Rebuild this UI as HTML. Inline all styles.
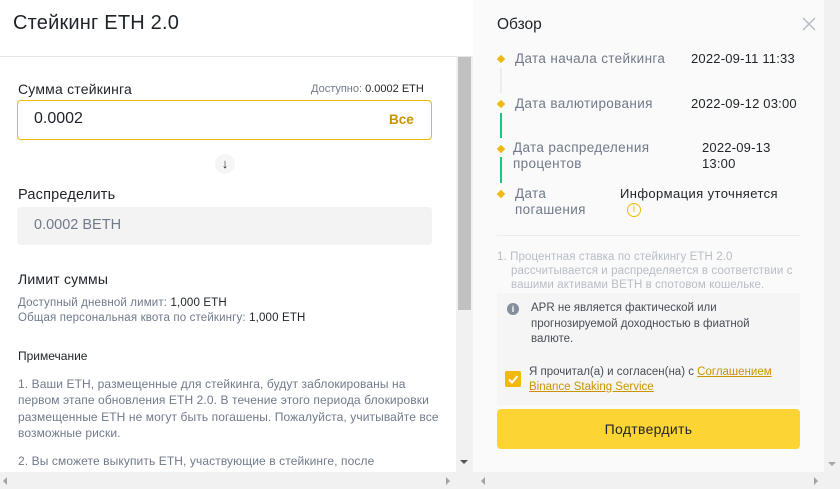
<!DOCTYPE html>
<html><head><meta charset="utf-8"><style>
*{box-sizing:border-box;margin:0;padding:0}
body{width:840px;height:489px;overflow:hidden;background:#fff;font-family:"Liberation Sans","DejaVu Sans",sans-serif;position:relative;color:#1e2329}
.abs{position:absolute}
</style></head><body>
<div class="abs" style="left:0;top:0;width:473px;height:489px;background:#fff"></div>
<div class="abs" style="left:13px;top:12px;font-size:20px;color:#1e2329;letter-spacing:0.2px">Стейкинг ETH 2.0</div>
<div class="abs" style="left:0;top:56px;width:473px;height:1px;background:#e6e6e6"></div>
<div class="abs" style="left:18px;top:81px;font-size:14px;color:#1e2329;letter-spacing:0.2px">Сумма стейкинга</div>
<div class="abs" style="left:311px;top:83px;font-size:11px;color:#707a8a">Доступно: <span style="color:#1e2329">0.0002 ETH</span></div>
<div class="abs" style="left:17px;top:100px;width:415px;height:40px;border:1px solid #f0b90b;border-radius:4px"></div>
<div class="abs" style="left:34px;top:110px;font-size:16px;color:#1e2329">0.0002</div>
<div class="abs" style="left:389px;top:112px;font-size:13.5px;color:#c99400;font-weight:bold">Все</div>
<div class="abs" style="left:215px;top:154px;width:20px;height:20px;border-radius:50%;background:#f5f5f5;text-align:center;font-size:13px;line-height:20px">↓</div>
<div class="abs" style="left:18px;top:187px;font-size:14.5px;color:#1e2329;letter-spacing:0.2px">Распределить</div>
<div class="abs" style="left:17px;top:207px;width:415px;height:38px;background:#f3f3f3;border-radius:4px"></div>
<div class="abs" style="left:34px;top:217px;font-size:14.5px;color:#707a8a">0.0002 BETH</div>
<div class="abs" style="left:18px;top:271px;font-size:14px;color:#1e2329;letter-spacing:0.2px">Лимит суммы</div>
<div class="abs" style="left:18px;top:296px;font-size:11.5px;line-height:14.5px;color:#707a8a;letter-spacing:0.15px">Доступный дневной лимит: <span style="color:#1e2329">1,000 ETH</span><br>Общая персональная квота по стейкингу: <span style="color:#1e2329">1,000 ETH</span></div>
<div class="abs" style="left:18px;top:349px;font-size:12px;color:#1e2329">Примечание</div>
<div class="abs" style="left:18px;top:376px;width:430px;font-size:12px;line-height:16.3px;color:#707a8a;letter-spacing:0.1px">1. Ваши ETH, размещенные для стейкинга, будут заблокированы на<br>первом этапе обновления ETH 2.0. В течение этого периода блокировки<br>размещенные ETH не могут быть погашены. Пожалуйста, учитывайте все<br>возможные риски.<br><div style="height:12px"></div>2. Вы сможете выкупить ETH, участвующие в стейкинге, после</div>
<div class="abs" style="left:456px;top:57px;width:17px;height:415px;background:#f1f1f1"></div>
<div class="abs" style="left:458px;top:57px;width:13px;height:253px;background:#c1c1c1"></div>
<div class="abs" style="left:460px;top:460px;width:0;height:0;border-left:4px solid transparent;border-right:4px solid transparent;border-top:4px solid #555"></div>
<div class="abs" style="left:0;top:472px;width:473px;height:17px;background:#f1f1f1"></div>
<div class="abs" style="left:446px;top:477px;border-top:4px solid transparent;border-bottom:4px solid transparent;border-left:4px solid #a3a3a3"></div>
<div class="abs" style="left:473px;top:0;width:351px;height:472px;background:#fafafa"></div>
<div class="abs" style="left:497px;top:16px;font-size:15.5px;color:#1e2329">Обзор</div>
<svg class="abs" style="left:802px;top:17px" width="14" height="14"><path d="M1 1L13 13M13 1L1 13" stroke="#b7bdc6" stroke-width="1.5"/></svg>
<div class="abs" style="left:498px;top:56px;width:6px;height:6px;background:#f0b90b;transform:rotate(45deg)"></div>
<div class="abs" style="left:500px;top:68px;width:2px;height:25px;background:#eaecef"></div>
<div class="abs" style="left:498px;top:101px;width:6px;height:6px;background:#f0b90b;transform:rotate(45deg)"></div>
<div class="abs" style="left:500px;top:113px;width:2px;height:25px;background:#0ecb81"></div>
<div class="abs" style="left:498px;top:146px;width:6px;height:6px;background:#f0b90b;transform:rotate(45deg)"></div>
<div class="abs" style="left:500px;top:157px;width:2px;height:26px;background:#0ecb81"></div>
<div class="abs" style="left:498px;top:191px;width:6px;height:6px;background:#f0b90b;transform:rotate(45deg)"></div>
<div class="abs" style="left:515px;top:51px;font-size:13.5px;color:#707a8a;letter-spacing:0.35px">Дата начала стейкинга</div>
<div class="abs" style="left:691px;top:51px;font-size:13px;color:#1e2329;letter-spacing:0.2px">2022-09-11 11:33</div>
<div class="abs" style="left:515px;top:96px;font-size:13.5px;color:#707a8a;letter-spacing:0.35px">Дата валютирования</div>
<div class="abs" style="left:691px;top:96px;font-size:13px;color:#1e2329;letter-spacing:0.2px">2022-09-12 03:00</div>
<div class="abs" style="left:513px;top:140px;font-size:13.5px;line-height:16px;color:#707a8a;letter-spacing:0.35px">Дата распределения<br>процентов</div>
<div class="abs" style="left:702px;top:140px;font-size:13px;line-height:16px;color:#1e2329;letter-spacing:0.2px">2022-09-13<br>13:00</div>
<div class="abs" style="left:515px;top:186px;font-size:13.5px;line-height:16px;color:#707a8a;letter-spacing:0.35px">Дата<br>погашения</div>
<div class="abs" style="left:620px;top:186px;font-size:13px;color:#1e2329;letter-spacing:0.4px">Информация уточняется</div>
<div class="abs" style="left:627px;top:203px;width:14px;height:14px;border:1.2px solid #f0b90b;border-radius:50%;color:#f0b90b;font-size:10px;text-align:center;line-height:12px">i</div>
<div class="abs" style="left:497px;top:235px;width:303px;height:1px;background:#eaecef"></div>
<div class="abs" style="left:497px;top:250px;width:305px;font-size:11.5px;line-height:14px;color:#b7bdc6;padding-left:14px;text-indent:-14px;letter-spacing:0.1px">1. Процентная ставка по стейкингу ETH 2.0 рассчитывается и распределяется в соответствии с вашими активами BETH в спотовом кошельке.</div>
<div class="abs" style="left:497px;top:293px;width:303px;height:112px;background:#f5f5f5"></div>
<div class="abs" style="left:507px;top:303px;width:12px;height:12px;border-radius:50%;background:#848e9c;color:#fff;font-size:9px;font-weight:bold;text-align:center;line-height:12px">i</div>
<div class="abs" style="left:531px;top:301px;width:240px;font-size:11.5px;line-height:15.5px;color:#474d57">APR не является фактической или прогнозируемой доходностью в фиатной валюте.</div>
<div class="abs" style="left:505px;top:371px;width:16px;height:16px;background:#f0b90b;border-radius:2px"></div>
<svg class="abs" style="left:507px;top:373px" width="12" height="12"><path d="M2 6.5L5 9.5L10.5 3" stroke="#fff" stroke-width="2" fill="none"/></svg>
<div class="abs" style="left:529px;top:365px;width:270px;font-size:11.5px;line-height:14.5px;color:#474d57">Я прочитал(а) и согласен(на) с <span style="color:#c99400;text-decoration:underline">Соглашением Binance Staking Service</span></div>
<div class="abs" style="left:497px;top:409px;width:303px;height:40px;background:#fcd535;border-radius:4px;text-align:center;line-height:40px;font-size:14px;color:#1e2329;letter-spacing:0.3px">Подтвердить</div>
<div class="abs" style="left:824px;top:0;width:16px;height:472px;background:#f1f1f1"></div>
<div class="abs" style="left:828px;top:462px;border-left:4px solid transparent;border-right:4px solid transparent;border-top:4px solid #a3a3a3"></div>
<div class="abs" style="left:473px;top:472px;width:367px;height:17px;background:#f1f1f1"></div>
<div class="abs" style="left:481px;top:477px;border-top:4px solid transparent;border-bottom:4px solid transparent;border-right:4px solid #a3a3a3"></div>
<div class="abs" style="left:814px;top:477px;border-top:4px solid transparent;border-bottom:4px solid transparent;border-left:4px solid #a3a3a3"></div>
<div class="abs" style="left:3px;top:477px;border-top:4px solid transparent;border-bottom:4px solid transparent;border-right:4px solid #a3a3a3"></div>
</body></html>
